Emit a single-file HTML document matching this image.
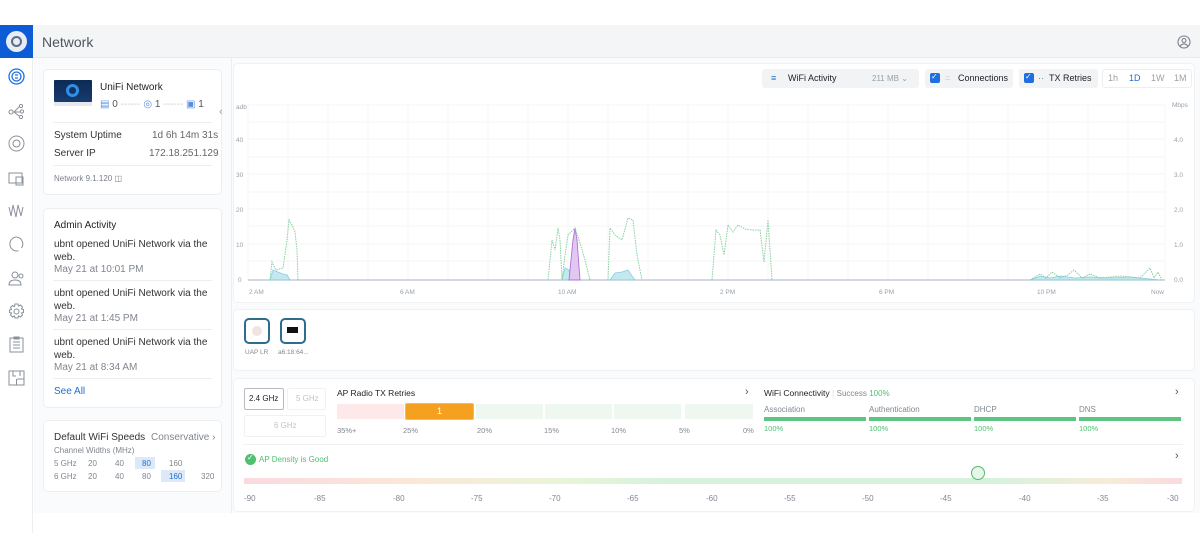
<!DOCTYPE html>
<html><head><meta charset="utf-8">
<style>
*{box-sizing:border-box;margin:0;padding:0}
body{width:1200px;height:533px;overflow:hidden;background:#fff;font-family:"Liberation Sans",sans-serif;color:#212327;position:relative}
.abs{position:absolute}
.card{position:absolute;background:#fff;border:1px solid #eceef0;border-radius:5px}
.t{position:absolute;white-space:nowrap}
.g{color:#808893}
.side svg{position:absolute;left:8px}
</style></head><body>
<div class="abs" style="left:0;top:25px;width:1200px;height:33px;background:#f4f5f7;border-bottom:1px solid #e8eaed"></div>
<div class="abs" style="left:0;top:25px;width:33px;height:33px;background:#0b5cd5"></div>
<div class="abs" style="left:6px;top:31px;width:21px;height:21px;border-radius:50%;background:#e8ecf4"></div>
<div class="abs" style="left:11px;top:36px;width:11px;height:11px;border-radius:50%;border:2px solid #5c6c85"></div>
<div class="t" style="left:42px;top:34px;font-size:14px;color:#50565e">Network</div>
<svg class="abs" style="left:1177px;top:35px" width="14" height="14" viewBox="0 0 14 14" fill="none" stroke="#7a808a" stroke-width="1.1"><circle cx="7" cy="7" r="6"/><circle cx="7" cy="5.5" r="2"/><path d="M3 11.5c1-2 2.5-2.6 4-2.6s3 .6 4 2.6"/></svg>
<div class="abs" style="left:0;top:58px;width:33px;height:475px;border-right:1px solid #eceef0;background:#fff"></div>
<div class="side">
<svg style="top:68px" width="17" height="17" viewBox="0 0 17 17" fill="none" stroke="#1f6fe0" stroke-width="1.3"><circle cx="8.5" cy="8.5" r="7.5"/><circle cx="8.5" cy="8.5" r="4.5"/><path d="M7 7h3M7 10h3"/></svg>
<svg style="top:103px" width="17" height="17" viewBox="0 0 17 17" fill="none" stroke="#8a909a" stroke-width="1"><circle cx="3" cy="9" r="2"/><circle cx="13" cy="3" r="1.6"/><circle cx="14" cy="8.5" r="1.6"/><circle cx="13" cy="14" r="1.6"/><path d="M5 9h7M6 9l5-5M6 9l5 4"/></svg>
<svg style="top:135px" width="17" height="17" viewBox="0 0 17 17" fill="none" stroke="#8a909a" stroke-width="1"><circle cx="8.5" cy="8.5" r="7.5"/><circle cx="8.5" cy="8.5" r="3.5"/></svg>
<svg style="top:170px" width="17" height="17" viewBox="0 0 17 17" fill="none" stroke="#8a909a" stroke-width="1"><rect x="1" y="3" width="13" height="10"/><rect x="8" y="7" width="7" height="8"/></svg>
<svg style="top:203px" width="17" height="17" viewBox="0 0 17 17" fill="none" stroke="#8a909a" stroke-width="1"><path d="M1 4l2 9 2-11 3 12 2-12 3 11 2-9"/></svg>
<svg style="top:236px" width="17" height="17" viewBox="0 0 17 17" fill="none" stroke="#8a909a" stroke-width="1"><path d="M8.5 1a7 7 0 1 0 2 13.8"/><path d="M8.5 1a7 7 0 0 1 5 11"/></svg>
<svg style="top:270px" width="17" height="17" viewBox="0 0 17 17" fill="none" stroke="#8a909a" stroke-width="1"><circle cx="7" cy="5" r="3"/><path d="M1 15c0-4 3-5 6-5s6 1 6 5z"/><circle cx="13" cy="6" r="2"/></svg>
<svg style="top:303px" width="17" height="17" viewBox="0 0 17 17" fill="none" stroke="#8a909a" stroke-width="1"><circle cx="8.5" cy="8.5" r="2.5"/><path d="M7 1h3l.5 2 2-1 2 2-1 2 2 .5v3l-2 .5 1 2-2 2-2-1-.5 2H7l-.5-2-2 1-2-2 1-2-2-.5V7l2-.5-1-2 2-2 2 1z"/></svg>
<svg style="top:336px" width="17" height="17" viewBox="0 0 17 17" fill="none" stroke="#8a909a" stroke-width="1"><rect x="2" y="2" width="13" height="14"/><rect x="6" y="1" width="5" height="2"/><path d="M5 6h7M5 9h7M5 12h7"/></svg>
<svg style="top:369px" width="17" height="17" viewBox="0 0 17 17" fill="none" stroke="#8a909a" stroke-width="1"><rect x="1" y="2" width="15" height="14"/><path d="M5 2v5h3M12 2v5M9 10h7M8.5 10v6"/></svg>
</div>
<div class="abs" style="left:34px;top:58px;width:198px;height:455px;background:#fafbfc;border-right:1px solid #eceef0"></div>
<div class="abs" style="left:232px;top:58px;width:968px;height:455px;background:#fafbfc"></div>
<div class="card" style="left:43px;top:69px;width:179px;height:126px"></div>
<div class="abs" style="left:54px;top:80px;width:38px;height:22px;background:linear-gradient(#0c2a55,#183b6e);border-radius:1px"></div>
<div class="abs" style="left:66px;top:84px;width:13px;height:13px;border-radius:50%;border:3px solid #2f8fe8"></div>
<div class="abs" style="left:54px;top:102px;width:38px;height:4px;background:#e6e8ec"></div>
<div class="t" style="left:100px;top:82px;font-size:10px">UniFi Network</div>
<div class="t" style="left:100px;top:99px;font-size:10px;color:#50565e"><span style="color:#5a8fe0">&#9636;</span> 0 <span style="color:#ccc">------</span> <span style="color:#5a8fe0">&#9678;</span> 1 <span style="color:#ccc">------</span> <span style="color:#5a8fe0">&#9635;</span> 1</div>
<div class="abs" style="left:53px;top:122px;width:159px;border-top:1px solid #eceef0"></div>
<div class="t" style="left:54px;top:130px;font-size:10px;color:#333">System Uptime</div>
<div class="t" style="left:152px;top:130px;font-size:10px;color:#666">1d 6h 14m 31s</div>
<div class="t" style="left:54px;top:148px;font-size:10px;color:#333">Server IP</div>
<div class="t" style="left:149px;top:148px;font-size:10px;color:#666">172.18.251.129</div>
<div class="abs" style="left:53px;top:165px;width:159px;border-top:1px solid #eceef0"></div>
<div class="t" style="left:54px;top:174px;font-size:8px;color:#7a808a">Network 9.1.120 &#9707;</div>
<div class="card" style="left:43px;top:208px;width:179px;height:200px"></div>
<div class="t" style="left:54px;top:220px;font-size:10px">Admin Activity</div>
<div class="t" style="left:54px;top:238px;font-size:10px;line-height:13px;color:#333">ubnt opened UniFi Network via the<br>web.</div>
<div class="t" style="left:54px;top:264px;font-size:10px;color:#80868f">May 21 at 10:01 PM</div>
<div class="abs" style="left:53px;top:280px;width:159px;border-top:1px solid #eceef0"></div>
<div class="t" style="left:54px;top:287px;font-size:10px;line-height:13px;color:#333">ubnt opened UniFi Network via the<br>web.</div>
<div class="t" style="left:54px;top:313px;font-size:10px;color:#80868f">May 21 at 1:45 PM</div>
<div class="abs" style="left:53px;top:329px;width:159px;border-top:1px solid #eceef0"></div>
<div class="t" style="left:54px;top:336px;font-size:10px;line-height:13px;color:#333">ubnt opened UniFi Network via the<br>web.</div>
<div class="t" style="left:54px;top:362px;font-size:10px;color:#80868f">May 21 at 8:34 AM</div>
<div class="abs" style="left:53px;top:378px;width:159px;border-top:1px solid #eceef0"></div>
<div class="t" style="left:54px;top:386px;font-size:10px;color:#1f6fd0">See All</div>
<div class="card" style="left:43px;top:420px;width:179px;height:72px"></div>
<div class="t" style="left:54px;top:432px;font-size:10px;color:#333">Default WiFi Speeds</div>
<div class="t" style="left:151px;top:432px;font-size:10px;color:#80868f">Conservative &#8250;</div>
<div class="t" style="left:54px;top:446px;font-size:8px;color:#80868f">Channel Widths (MHz)</div>
<div class="t" style="left:54px;top:459px;font-size:8px;color:#80868f">5 GHz</div>
<div class="t" style="left:54px;top:472px;font-size:8px;color:#80868f">6 GHz</div>
<div class="abs" style="left:135px;top:457px;width:20px;height:12px;background:#dde9f8"></div>
<div class="abs" style="left:161px;top:470px;width:24px;height:12px;background:#dde9f8"></div>
<div class="t" style="left:88px;top:459px;font-size:8px;color:#80868f"><span style="display:inline-block;width:27px">20</span><span style="display:inline-block;width:27px">40</span><span style="display:inline-block;width:27px;color:#1f6fd0">80</span><span>160</span></div>
<div class="t" style="left:88px;top:472px;font-size:8px;color:#80868f"><span style="display:inline-block;width:27px">20</span><span style="display:inline-block;width:27px">40</span><span style="display:inline-block;width:27px">80</span><span style="display:inline-block;width:32px;color:#1f6fd0">160</span><span>320</span></div>
<div class="t" style="left:219px;top:106px;font-size:11px;color:#9aa0a8">&#8249;</div>
<div class="card" style="left:233px;top:63px;width:962px;height:240px;border-color:#f0f1f3"></div>
<div class="abs" style="left:762px;top:69px;width:157px;height:19px;background:#f2f3f5;border-radius:3px"></div>
<div class="t" style="left:771px;top:73px;font-size:9px;color:#1f6fd0">&#8801;</div>
<div class="t" style="left:788px;top:73px;font-size:9px">WiFi Activity</div>
<div class="t" style="left:872px;top:74px;font-size:8px;color:#9aa0a8">211 MB &#8964;</div>
<div class="abs" style="left:925px;top:69px;width:88px;height:19px;background:#f2f3f5;border-radius:3px"></div>
<div class="abs" style="left:930px;top:73px;width:10px;height:10px;background:#1f6fe0;border-radius:2px"></div>
<div class="t" style="left:931px;top:72px;font-size:8px;color:#fff">&#10003;</div>
<div class="t" style="left:945px;top:73px;font-size:9px;color:#c8ccd2">=</div>
<div class="t" style="left:958px;top:73px;font-size:9px">Connections</div>
<div class="abs" style="left:1019px;top:69px;width:79px;height:19px;background:#f2f3f5;border-radius:3px"></div>
<div class="abs" style="left:1024px;top:73px;width:10px;height:10px;background:#1f6fe0;border-radius:2px"></div>
<div class="t" style="left:1025px;top:72px;font-size:8px;color:#fff">&#10003;</div>
<div class="t" style="left:1038px;top:73px;font-size:9px;color:#5a8fa0">··</div>
<div class="t" style="left:1049px;top:73px;font-size:9px">TX Retries</div>
<div class="abs" style="left:1102px;top:69px;width:90px;height:19px;border:1px solid #eceef0;border-radius:3px;background:#fff"></div>
<div class="t" style="left:1108px;top:73px;font-size:9px;color:#9aa0a8">1h</div>
<div class="t" style="left:1129px;top:73px;font-size:9px;color:#1f6fd0">1D</div>
<div class="t" style="left:1151px;top:73px;font-size:9px;color:#9aa0a8">1W</div>
<div class="t" style="left:1174px;top:73px;font-size:9px;color:#9aa0a8">1M</div>
<svg class="abs" style="left:233px;top:95px" width="962" height="205">
<g stroke="#f4f5f7" stroke-width="1">
<path d="M15 10V185M55 10V185M95 10V185M135 10V185M175 10V185M215 10V185M255 10V185M295 10V185M335 10V185M375 10V185M415 10V185M455 10V185M495 10V185M535 10V185M575 10V185M615 10V185M655 10V185M695 10V185M735 10V185M775 10V185M815 10V185M855 10V185M895 10V185M932 10V185"/>
<path d="M15 10H932M15 27H932M15 44H932M15 62H932M15 79H932M15 97H932M15 114H932M15 131H932M15 149H932M15 166H932"/>
</g>
<path d="M15 185H932" stroke="#a8b0c0" stroke-width="1"/>
<g font-family="Liberation Sans" font-size="6.5" fill="#9aa0a8">
<text x="3" y="14">adb</text><text x="3" y="47">40</text><text x="3" y="82">30</text><text x="3" y="117">20</text><text x="3" y="152">10</text><text x="5" y="187">0</text>
<text x="939" y="12">Mbps</text><text x="941" y="47">4.0</text><text x="941" y="82">3.0</text><text x="941" y="117">2.0</text><text x="941" y="152">1.0</text><text x="941" y="187">0.0</text>
<text x="16" y="199">2 AM</text><text x="167" y="199">6 AM</text><text x="325" y="199">10 AM</text><text x="487" y="199">2 PM</text><text x="646" y="199">6 PM</text><text x="804" y="199">10 PM</text><text x="918" y="199">Now</text>
</g>
<g transform="translate(-233,-95)">
<g fill="#bfe6ee" stroke="#7cc8dc" stroke-width="0.8" opacity="0.9">
<path d="M270 280L273 270L278 272L283 274L287 275L290 280Z"/>
<path d="M562 280L565 268L569 270L572 280Z"/>
<path d="M610 280L615 273L622 272L628 270L632 276L635 280Z"/>
<path d="M1030 280L1040 276L1050 278L1060 276L1075 278L1090 277L1110 278L1130 277L1150 279L1160 280Z"/>
</g>
<path d="M569 280L573 240L575 228L577 240L580 280Z" fill="#e2c8f0" stroke="#b070d8" stroke-width="0.9"/>
<g fill="none" stroke="#86d0a0" stroke-width="1" stroke-dasharray="1.5 1">
<path d="M270 280L272 262L276 270L283 268L287 240L289 220L292 225L295 232L297 250L298 280"/>
<path d="M548 280L552 240L555 250L558 228L560 240L562 280L565 255L568 235L571 232L575 228L579 240L585 260L590 280"/>
<path d="M608 280L610 228L615 235L622 240L628 218L633 220L637 255L642 280"/>
<path d="M712 280L716 230L720 235L724 255L728 225L733 232L738 225L745 229L752 230L760 230L764 262L768 220L772 280"/>
<path d="M1030 280L1040 274L1046 278L1052 272L1060 278L1068 275L1074 270L1082 278L1090 274L1100 278L1120 276L1140 278L1150 268L1154 278L1158 272L1162 280"/>
</g>
</g>
</svg>
<div class="card" style="left:233px;top:309px;width:962px;height:62px;border-color:#f0f1f3"></div>
<div class="abs" style="left:244px;top:318px;width:26px;height:26px;border:2px solid #2e6d8e;border-radius:5px;background:#fff"></div>
<div class="abs" style="left:252px;top:326px;width:10px;height:10px;border-radius:50%;background:#f1e4e0"></div>
<div class="abs" style="left:280px;top:318px;width:26px;height:26px;border:2px solid #2e6d8e;border-radius:5px;background:#fff"></div>
<div class="abs" style="left:287px;top:327px;width:11px;height:6px;background:#111"></div>
<div class="t" style="left:245px;top:349px;font-size:6.5px;color:#808893">UAP LR</div>
<div class="t" style="left:278px;top:349px;font-size:6.5px;color:#808893">a6:18:64...</div>
<div class="card" style="left:233px;top:378px;width:962px;height:134px;border-color:#f0f1f3"></div>
<div class="abs" style="left:244px;top:388px;width:40px;height:22px;border:1px solid #b8bcc2;border-radius:2px"></div>
<div class="t" style="left:249px;top:394px;font-size:8px">2.4 GHz</div>
<div class="abs" style="left:287px;top:388px;width:39px;height:22px;border:1px solid #f0f1f3;border-radius:2px"></div>
<div class="t" style="left:296px;top:394px;font-size:8px;color:#c0c4ca">5 GHz</div>
<div class="abs" style="left:244px;top:415px;width:82px;height:22px;border:1px solid #f0f1f3;border-radius:2px"></div>
<div class="t" style="left:274px;top:421px;font-size:8px;color:#c0c4ca">6 GHz</div>
<div class="t" style="left:337px;top:388px;font-size:8.5px">AP Radio TX Retries</div>
<div class="t" style="left:745px;top:386px;font-size:11px;color:#555">&#8250;</div>
<div class="abs" style="left:337px;top:404px;width:67px;height:15px;background:#fde8ea"></div>
<div class="abs" style="left:405px;top:403px;width:69px;height:17px;background:#f5a01f;border:1px solid #f0c050;border-radius:2px"></div>
<div class="t" style="left:437px;top:406px;font-size:9px;color:#fff">1</div>
<div class="abs" style="left:476px;top:404px;width:67px;height:15px;background:#eef8f0"></div>
<div class="abs" style="left:545px;top:404px;width:67px;height:15px;background:#eef8f0"></div>
<div class="abs" style="left:614px;top:404px;width:67px;height:15px;background:#eef8f0"></div>
<div class="abs" style="left:685px;top:404px;width:68px;height:15px;background:#eef8f0"></div>
<div class="t g" style="left:337px;top:426px;font-size:7.5px">35%+</div>
<div class="t g" style="left:403px;top:426px;font-size:7.5px">25%</div>
<div class="t g" style="left:477px;top:426px;font-size:7.5px">20%</div>
<div class="t g" style="left:544px;top:426px;font-size:7.5px">15%</div>
<div class="t g" style="left:611px;top:426px;font-size:7.5px">10%</div>
<div class="t g" style="left:679px;top:426px;font-size:7.5px">5%</div>
<div class="t g" style="left:743px;top:426px;font-size:7.5px">0%</div>
<div class="t" style="left:764px;top:388px;font-size:8.5px">WiFi Connectivity <span style="color:#ddd">|</span> <span style="color:#808893;font-size:8px">Success</span> <span style="color:#4fbf70;font-size:8px">100%</span></div>
<div class="t" style="left:1175px;top:386px;font-size:11px;color:#555">&#8250;</div>
<div class="t g" style="left:764px;top:405px;font-size:8px">Association</div>
<div class="t g" style="left:869px;top:405px;font-size:8px">Authentication</div>
<div class="t g" style="left:974px;top:405px;font-size:8px">DHCP</div>
<div class="t g" style="left:1079px;top:405px;font-size:8px">DNS</div>
<div class="abs" style="left:764px;top:417px;width:102px;height:4px;background:#5cc681"></div>
<div class="abs" style="left:869px;top:417px;width:102px;height:4px;background:#5cc681"></div>
<div class="abs" style="left:974px;top:417px;width:102px;height:4px;background:#5cc681"></div>
<div class="abs" style="left:1079px;top:417px;width:102px;height:4px;background:#5cc681"></div>
<div class="t" style="left:764px;top:424px;font-size:7.5px;color:#4fbf70">100%</div>
<div class="t" style="left:869px;top:424px;font-size:7.5px;color:#4fbf70">100%</div>
<div class="t" style="left:974px;top:424px;font-size:7.5px;color:#4fbf70">100%</div>
<div class="t" style="left:1079px;top:424px;font-size:7.5px;color:#4fbf70">100%</div>
<div class="abs" style="left:243px;top:444px;width:940px;border-top:1px solid #f0f1f3"></div>
<div class="abs" style="left:245px;top:454px;width:11px;height:11px;border-radius:50%;background:#4fbf70"></div>
<div class="t" style="left:247px;top:453px;font-size:8px;color:#fff">&#10003;</div>
<div class="t" style="left:259px;top:455px;font-size:8px;color:#4fbf70">AP Density is Good</div>
<div class="t" style="left:1175px;top:450px;font-size:11px;color:#555">&#8250;</div>
<div class="abs" style="left:244px;top:478px;width:938px;height:6px;background:linear-gradient(90deg,#fadadf 0%,#fbe7d8 18%,#eaf5d8 33%,#d6f2dc 45%,#d6f2dc 80%,#f7ecd8 92%,#fadadf 100%)"></div>
<div class="abs" style="left:971px;top:466px;width:14px;height:14px;border-radius:50%;border:1px solid #56b86e;background:#e6f6e9"></div>
<div class="t g" style="left:244px;top:494px;font-size:8px">-90</div>
<div class="t g" style="left:314px;top:494px;font-size:8px">-85</div>
<div class="t g" style="left:393px;top:494px;font-size:8px">-80</div>
<div class="t g" style="left:471px;top:494px;font-size:8px">-75</div>
<div class="t g" style="left:549px;top:494px;font-size:8px">-70</div>
<div class="t g" style="left:627px;top:494px;font-size:8px">-65</div>
<div class="t g" style="left:706px;top:494px;font-size:8px">-60</div>
<div class="t g" style="left:784px;top:494px;font-size:8px">-55</div>
<div class="t g" style="left:862px;top:494px;font-size:8px">-50</div>
<div class="t g" style="left:940px;top:494px;font-size:8px">-45</div>
<div class="t g" style="left:1019px;top:494px;font-size:8px">-40</div>
<div class="t g" style="left:1097px;top:494px;font-size:8px">-35</div>
<div class="t g" style="left:1167px;top:494px;font-size:8px">-30</div>
</body></html>
